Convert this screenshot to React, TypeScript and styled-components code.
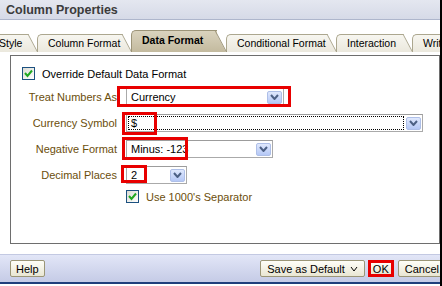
import styled, { createGlobalStyle } from 'styled-components';

const GlobalStyle = createGlobalStyle`
  html, body { margin: 0; padding: 0; background: #fff; }
  body {
    font-family: "Liberation Sans", Arial, sans-serif;
    font-size: 11px;
    color: #000;
  }
`;

const Dialog = styled.div`
  width: 442px;
  height: 286px;
  box-sizing: border-box;
  border-right: 2px solid #000;
  display: flex;
  flex-direction: column;
  overflow: hidden;
  background: #fff;
`;

const TitleBar = styled.div`
  flex: none;
  height: 19px;
  border-bottom: 1px solid #aeb6cc;
  background: linear-gradient(#e4e7f0, #d6dae7);
  padding-left: 6px;
  display: flex;
  align-items: center;
  font-size: 12.5px;
  font-weight: bold;
  color: #3b3b3b;
`;

const TabStrip = styled.div`
  flex: none;
  display: flex;
  align-items: flex-end;
  height: 22px;
  margin: 10px 0 0 -12px;
  font-size: 10.5px;
`;

const Tab = styled.div<{ $w: number; $active?: boolean }>`
  position: relative;
  flex: none;
  width: ${p => p.$w}px;
  height: ${p => (p.$active ? 22 : 18)}px;
  margin-right: -1px;
  box-sizing: border-box;
  padding: ${p => (p.$active ? '0 0 2px 11px' : '0 0 0 11px')};
  display: flex;
  align-items: center;
  white-space: nowrap;
  font-weight: ${p => (p.$active ? 'bold' : 'normal')};
  z-index: ${p => (p.$active ? 2 : 1)};

  &::before,
  &::after {
    content: '';
    position: absolute;
    top: 0;
    bottom: 0;
    z-index: -1;
    border-top: 1px solid ${p => (p.$active ? '#9c9478' : '#aca78f')};
    background: ${p =>
      p.$active
        ? 'linear-gradient(#dad3be, #c3ba9e)'
        : 'linear-gradient(#f7f6f0, #ebe8dd)'};
  }
  &::before {
    left: 0;
    right: 10px;
    border-left: 1px solid ${p => (p.$active ? '#9c9478' : '#aca78f')};
    border-top-left-radius: 5px;
  }
  &::after {
    right: 0;
    width: 16px;
    border-right: 1px solid ${p => (p.$active ? '#9c9478' : '#aca78f')};
    transform: skewX(28deg);
    transform-origin: bottom left;
  }
`;

const Panel = styled.div`
  flex: none;
  margin: 3px 0 0 10px;
  height: 189px;
  box-sizing: border-box;
  border: 1px solid #6e6e6e;
  padding: 11px 0 0 11px;
  display: flex;
  flex-direction: column;
  gap: 8px;
`;

const CheckRow = styled.label<{ $brown?: boolean }>`
  display: flex;
  align-items: center;
  gap: 4px;
  height: 13px;
  color: ${p => (p.$brown ? '#6b4e0b' : '#000')};
`;

const Box = styled.span`
  flex: none;
  width: 11px;
  height: 11px;
  border: 1px solid #1c5180;
  background: linear-gradient(135deg, #dcdcd4, #fff);
  display: flex;
  align-items: center;
  justify-content: center;
  margin-right: 3px;
`;

const FieldRow = styled.div<{ $up?: number }>`
  display: grid;
  grid-template-columns: 95px auto;
  column-gap: 9px;
  align-items: center;
  margin-top: ${p => -(p.$up || 0)}px;
`;

const Label = styled.span`
  text-align: right;
  color: #6b4e0b;
  white-space: nowrap;
`;

const Field = styled.div`
  position: relative;
  justify-self: start;
`;

const Select = styled.div<{ $w: number }>`
  width: ${p => p.$w}px;
  height: 18px;
  box-sizing: border-box;
  border: 1px solid #aaa;
  border-top-color: #9c9c9c;
  background: #fff;
  display: flex;
  align-items: center;
  padding: 0 1px;
`;

const Value = styled.span<{ $focus?: boolean }>`
  flex: 1;
  align-self: stretch;
  margin: 1px 2px 1px 0;
  padding-left: 3px;
  display: flex;
  align-items: center;
  white-space: nowrap;
  outline: ${p => (p.$focus ? '1px dotted #000' : 'none')};
  outline-offset: -1px;
`;

const ArrowButton = styled.span`
  flex: none;
  width: 15px;
  height: 13px;
  box-sizing: border-box;
  border: 1px solid #aebfe8;
  border-radius: 2px;
  background: linear-gradient(#dfe8fd, #b5c8f6);
  display: flex;
  align-items: center;
  justify-content: center;
`;

const Mark = styled.span<{ $l: number; $t: number; $w: number; $h: number }>`
  position: absolute;
  left: ${p => p.$l}px;
  top: ${p => p.$t}px;
  width: ${p => p.$w}px;
  height: ${p => p.$h}px;
  box-sizing: border-box;
  border: 3px solid #e80000;
  pointer-events: none;
`;

const Footer = styled.div`
  flex: none;
  margin-top: auto;
  margin-bottom: 2px;
  height: 27px;
  border-top: 1px solid #c3c9e2;
  border-bottom: 2px solid #203f7c;
  background: linear-gradient(#e2e6f7, #c5cbe6);
  display: flex;
  align-items: center;
  justify-content: space-between;
  padding-left: 10px;
`;

const ButtonGroup = styled.div`
  display: flex;
  align-items: center;
  gap: 3px;
  margin-right: -6px;
`;

const Button = styled.button<{ $pad?: number; $marked?: boolean }>`
  height: 17px;
  box-sizing: border-box;
  padding: 0 ${p => p.$pad ?? 6}px;
  margin-right: ${p => (p.$marked ? 1 : 0)}px;
  font: 11px "Liberation Sans", Arial, sans-serif;
  color: #000;
  border: ${p => (p.$marked ? '3px solid #e80000' : '1px solid #9b9677')};
  border-radius: ${p => (p.$marked ? 0 : 2)}px;
  background: linear-gradient(#fefef8, #e9e6d3);
  display: inline-flex;
  align-items: center;
  gap: 5px;
`;

const Chevron = ({ color = '#4d6185', w = 7 }: { color?: string; w?: number }) => (
  <svg width={w + 2} height="6" viewBox={`0 0 ${w + 2} 6`}>
    <polyline
      points={`1,1 ${w / 2 + 1},5 ${w + 1},1`}
      fill="none"
      stroke={color}
      strokeWidth={color === '#4d6185' ? 2 : 1}
    />
  </svg>
);

const Tick = () => (
  <svg width="9" height="9" viewBox="0 0 9 9">
    <polyline points="1,4 3.5,7 8,1.5" fill="none" stroke="#21a821" strokeWidth="2" />
  </svg>
);

export default function App() {
  return (
    <>
      <GlobalStyle />
      <Dialog>
        <TitleBar>Column Properties</TitleBar>
        <TabStrip>
          <Tab $w={50}>Style</Tab>
          <Tab $w={95}>Column Format</Tab>
          <Tab $w={96} $active>Data Format</Tab>
          <Tab $w={111}>Conditional Format</Tab>
          <Tab $w={77}>Interaction</Tab>
          <Tab $w={70}>Write Back</Tab>
        </TabStrip>
        <Panel>
          <CheckRow>
            <Box><Tick /></Box>
            Override Default Data Format
          </CheckRow>
          <FieldRow>
            <Label>Treat Numbers As</Label>
            <Field>
              <Select $w={158}>
                <Value>Currency</Value>
                <ArrowButton><Chevron /></ArrowButton>
              </Select>
              <Mark $l={-9} $t={-2} $w={174} $h={21} />
            </Field>
          </FieldRow>
          <FieldRow>
            <Label>Currency Symbol</Label>
            <Field>
              <Select $w={297}>
                <Value $focus>$</Value>
                <ArrowButton><Chevron /></ArrowButton>
              </Select>
              <Mark $l={-4} $t={-2} $w={35} $h={23} />
            </Field>
          </FieldRow>
          <FieldRow>
            <Label>Negative Format</Label>
            <Field>
              <Select $w={147}>
                <Value>Minus: -123</Value>
                <ArrowButton><Chevron /></ArrowButton>
              </Select>
              <Mark $l={-4} $t={-3} $w={66} $h={23} />
            </Field>
          </FieldRow>
          <FieldRow>
            <Label>Decimal Places</Label>
            <Field>
              <Select $w={61}>
                <Value>2</Value>
                <ArrowButton><Chevron /></ArrowButton>
              </Select>
              <Mark $l={-5} $t={-1} $w={26} $h={18} />
            </Field>
          </FieldRow>
          <FieldRow $up={2}>
            <span />
            <CheckRow $brown>
              <Box><Tick /></Box>
              Use 1000's Separator
            </CheckRow>
          </FieldRow>
        </Panel>
        <Footer>
          <Button $pad={5}>Help</Button>
          <ButtonGroup>
            <Button>
              Save as Default
              <Chevron color="#000" w={6} />
            </Button>
            <Button $marked $pad={2}>OK</Button>
            <Button $pad={6}>Cancel</Button>
          </ButtonGroup>
        </Footer>
      </Dialog>
    </>
  );
}
